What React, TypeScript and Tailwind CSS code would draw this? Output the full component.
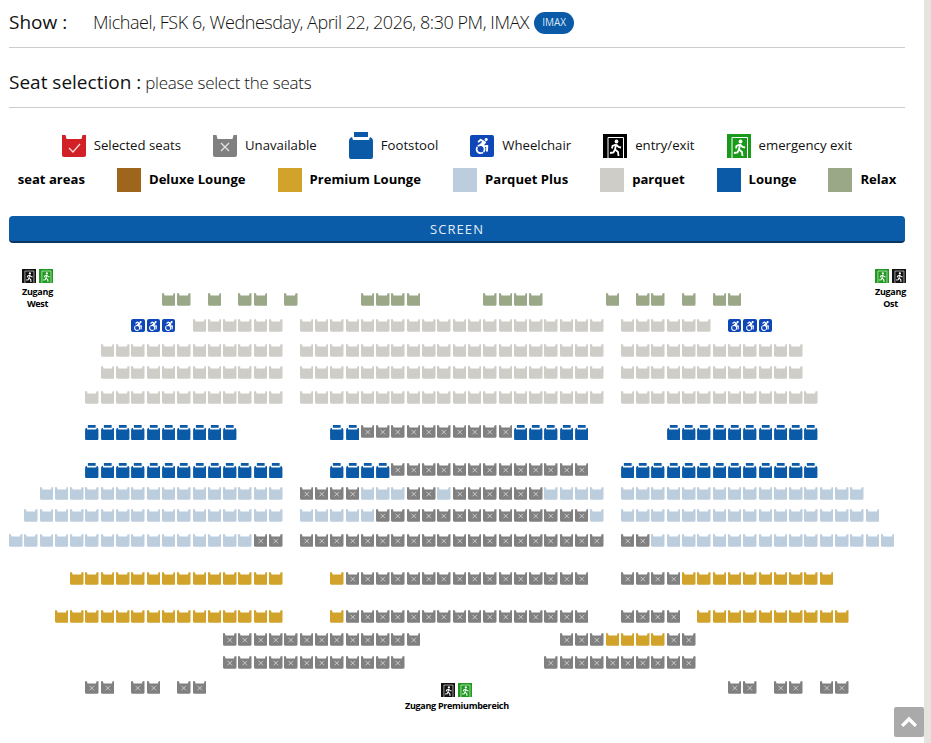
import { FaAccessibleIcon } from 'react-icons/fa';

type Kind = 'relax' | 'parquet' | 'plus' | 'lounge' | 'premium' | 'taken' | 'wheel';
type Segment = [Kind, number, number];

const fills: Record<string, string> = {
  relax: 'fill-[#9ba888]',
  parquet: 'fill-[#cfcdc8]',
  plus: 'fill-[#bccddd]',
  premium: 'fill-[#d1a32a]',
  taken: 'fill-[#808080]',
  selected: 'fill-[#d22027]',
};

// col = (x - 9) / 15.3
const rows: { gap: string; seats: Segment[] }[] = [
  { gap: 'mt-0', seats: [['relax', 10, 11], ['relax', 13, 13], ['relax', 15, 16], ['relax', 18, 18], ['relax', 23, 26], ['relax', 31, 34], ['relax', 39, 39], ['relax', 41, 42], ['relax', 44, 44], ['relax', 46, 47]] },
  { gap: 'mt-[13px]', seats: [['wheel', 8, 10], ['parquet', 12, 17], ['parquet', 19, 38], ['parquet', 40, 45], ['wheel', 47, 49]] },
  { gap: 'mt-[12px]', seats: [['parquet', 6, 17], ['parquet', 19, 38], ['parquet', 40, 51]] },
  { gap: 'mt-[9px]', seats: [['parquet', 6, 17], ['parquet', 19, 38], ['parquet', 40, 51]] },
  { gap: 'mt-[12px]', seats: [['parquet', 5, 17], ['parquet', 19, 38], ['parquet', 40, 52]] },
  { gap: 'mt-[21px]', seats: [['lounge', 5, 14], ['lounge', 21, 22], ['taken', 23, 32], ['lounge', 33, 37], ['lounge', 43, 52]] },
  { gap: 'mt-[25px]', seats: [['lounge', 5, 17], ['lounge', 21, 24], ['taken', 25, 37], ['lounge', 40, 52]] },
  { gap: 'mt-[11px]', seats: [['plus', 2, 17], ['taken', 19, 22], ['plus', 23, 25], ['taken', 26, 27], ['plus', 28, 28], ['taken', 29, 34], ['plus', 35, 38], ['plus', 40, 55]] },
  { gap: 'mt-[9px]', seats: [['plus', 1, 17], ['plus', 19, 23], ['taken', 24, 37], ['plus', 38, 38], ['plus', 40, 56]] },
  { gap: 'mt-[12px]', seats: [['plus', 0, 15], ['taken', 16, 17], ['taken', 19, 38], ['taken', 40, 41], ['plus', 42, 57]] },
  { gap: 'mt-[25px]', seats: [['premium', 4, 17], ['premium', 21, 21], ['taken', 22, 37], ['taken', 40, 43], ['premium', 44, 53]] },
  { gap: 'mt-[25px]', seats: [['premium', 3, 17], ['premium', 21, 21], ['taken', 22, 37], ['taken', 40, 43], ['premium', 45, 54]] },
  { gap: 'mt-[10px]', seats: [['taken', 14, 26], ['taken', 36, 38], ['premium', 39, 42], ['taken', 43, 44]] },
  { gap: 'mt-[10px]', seats: [['taken', 14, 25], ['taken', 35, 44]] },
  { gap: 'mt-[12px]', seats: [['taken', 5, 6], ['taken', 8, 9], ['taken', 11, 12], ['taken', 47, 48], ['taken', 50, 51], ['taken', 53, 54]] },
];

function Seat({ kind, className }: { kind: string; className: string }) {
  return (
    <svg viewBox="0 0 24 22" className={`${className} ${fills[kind]}`}>
      <path d="M0 0 H3.5 L4.5 4 H19.5 L20.5 0 H24 V20 Q24 22 22 22 H2 Q0 22 0 20 Z" />
      {kind === 'taken' && <path d="M8 8 L16 16 M16 8 L8 16" stroke="#e4e4e4" strokeWidth="1.3" fill="none" />}
      {kind === 'selected' && <path d="M7 13 L11 17 L18 9" stroke="#f6dcdc" strokeWidth="1.3" fill="none" />}
    </svg>
  );
}

function Footstool({ className }: { className: string }) {
  return (
    <svg viewBox="0 0 24 27" className={`${className} fill-[#0a5aa8]`}>
      <path d="M5 0 H19 V5 H5 Z" />
      <path d="M0 9 Q0 6 3 5 L4 8 H20 L21 5 Q24 6 24 9 V25 Q24 27 22 27 H2 Q0 27 0 25 Z" />
    </svg>
  );
}

function Wheelchair({ className, iconClass }: { className: string; iconClass: string }) {
  return (
    <span className={`flex items-center justify-center rounded-[2px] bg-[#0f47b8] text-white ${className}`}>
      <FaAccessibleIcon className={iconClass} />
    </span>
  );
}

function ExitSign({ className, bg }: { className: string; bg: string }) {
  return (
    <svg viewBox="0 0 24 24" className={className}>
      <rect width="24" height="24" fill={bg} />
      <path d="M5 24 V3.5 H20.5 V24" stroke="#fff" strokeWidth="1" fill="none" />
      <circle cx="13.5" cy="7.5" r="1.9" fill="#fff" />
      <path d="M13 10.5 L12 15.5 L15 18 L15.5 22 M12 15.5 L10.5 18.5 L7 19 M13 10.5 L9.5 12 L9 14.5 M13 10.5 L15.5 13 L18 13.5" stroke="#fff" strokeWidth="1.8" fill="none" />
    </svg>
  );
}

function SeatRow({ gap, seats }: { gap: string; seats: Segment[] }) {
  const cells: (Kind | null)[] = Array(58).fill(null);
  seats.forEach(([kind, from, to]) => {
    for (let i = from; i <= to; i++) cells[i] = kind;
  });
  return (
    <div className={`grid h-[13px] grid-cols-[repeat(58,15.3px)] ${gap}`}>
      {cells.map((kind, i) => {
        if (!kind) return <span key={i} />;
        if (kind === 'lounge') return <Footstool key={i} className="block h-[15px] w-[13.5px]" />;
        if (kind === 'wheel') return <Wheelchair key={i} className="h-[13px] w-[13.5px]" iconClass="h-[10px] w-[10px]" />;
        return <Seat key={i} kind={kind} className="block h-[13px] w-[13.5px]" />;
      })}
    </div>
  );
}

function Access({ label, reversed, className }: { label: string[]; reversed?: boolean; className: string }) {
  const black = <ExitSign className="h-[14px] w-[14px]" bg="#111" />;
  const green = <ExitSign className="h-[14px] w-[14px]" bg="#1f9a1f" />;
  return (
    <div className={`absolute flex flex-col items-center ${className}`}>
      <div className="flex gap-[3px]">
        {reversed ? green : black}
        {reversed ? black : green}
      </div>
      <div className="mt-[3px] text-center text-[9px] leading-[12.3px] font-bold tracking-[-0.3px] whitespace-nowrap text-black">
        {label.map((line) => (
          <div key={line}>{line}</div>
        ))}
      </div>
    </div>
  );
}

const areas = [
  ['Deluxe Lounge', 'bg-[#9e661d]'],
  ['Premium Lounge', 'bg-[#d1a32a]'],
  ['Parquet Plus', 'bg-[#bccddd]'],
  ['parquet', 'bg-[#cfcdc8]'],
  ['Lounge', 'bg-[#0a5aa8]'],
  ['Relax', 'bg-[#9ba888]'],
];

export default function App() {
  return (
    <div className="flex h-[743px] w-[931px] overflow-hidden bg-white font-['Open_Sans',sans-serif] text-[#111]">
      <div className="relative w-[924px] shrink-0 pr-[19px] pl-[9px]">
        {/* Show */}
        <div className="flex h-[48px] items-center border-b border-[#ccc] pb-[2px]">
          <span className="w-[84px] text-[19px]">Show :</span>
          <span className="text-[18px] font-light tracking-[-0.45px]">Michael, FSK 6, Wednesday, April 22, 2026, 8:30 PM, IMAX</span>
          <span className="ml-[5px] flex h-[22px] w-[40px] items-center justify-center rounded-full bg-[#0a5aa8] text-[10px] text-[#dce8f4]">IMAX</span>
        </div>

        {/* Seat selection */}
        <div className="flex h-[60px] items-center border-b border-[#ccc] pt-[10px]">
          <span className="text-[19px]">Seat selection :</span>
          <span className="ml-[4px] text-[17px] font-light tracking-[-0.25px]">please select the seats</span>
        </div>

        {/* Legend */}
        <div className="mt-[24px] flex h-[27px] items-center justify-center gap-8 text-[13.2px]">
          <div className="flex items-center gap-2">
            <Seat kind="selected" className="h-[22px] w-[24px]" />
            <span>Selected seats</span>
          </div>
          <div className="flex items-center gap-2">
            <Seat kind="taken" className="h-[22px] w-[24px]" />
            <span>Unavailable</span>
          </div>
          <div className="flex items-center gap-2">
            <Footstool className="h-[27px] w-[24px]" />
            <span>Footstool</span>
          </div>
          <div className="flex items-center gap-2">
            <Wheelchair className="h-[22px] w-[24px]" iconClass="h-[16px] w-[16px]" />
            <span>Wheelchair</span>
          </div>
          <div className="flex items-center gap-2">
            <ExitSign className="h-[24px] w-[24px]" bg="#000" />
            <span>entry/exit</span>
          </div>
          <div className="flex items-center gap-2">
            <ExitSign className="h-[24px] w-[24px]" bg="#1a9a1a" />
            <span>emergency exit</span>
          </div>
        </div>
        <div className="mt-[9px] flex h-[24px] items-center justify-center gap-8 text-[13.1px] font-bold text-black">
          <span>seat areas</span>
          {areas.map(([name, color]) => (
            <div key={name} className="flex items-center gap-2">
              <span className={`h-[24px] w-[24px] ${color}`} />
              <span>{name}</span>
            </div>
          ))}
        </div>

        {/* Screen */}
        <div className="mt-[24px] flex h-[27px] items-center justify-center rounded-[4px] border-b-2 border-[#0a3560] bg-[#0b5ca8] pt-[2px] text-[13px] tracking-[1.1px] text-[#e4eef8]">
          SCREEN
        </div>

        {/* Seat map */}
        <div className="relative mt-[50px]">
          {rows.map((row, i) => (
            <SeatRow key={i} gap={row.gap} seats={row.seats} />
          ))}
          <Access label={['Zugang', 'West']} className="top-[-24px] left-[13px]" />
          <Access label={['Zugang', 'Ost']} reversed className="top-[-24px] left-[866px]" />
          <Access label={['Zugang Premiumbereich']} className="top-[390px] left-[396px]" />
        </div>

        {/* Back to top */}
        <div className="absolute top-[707px] left-[894px] flex h-[30px] w-[30px] items-center justify-center rounded-[2px] bg-[#aaa]">
          <svg viewBox="0 0 20 14" className="h-[12px] w-[18px]">
            <path d="M2 11.5 L10 3.5 L18 11.5" stroke="#fff" strokeWidth="4" fill="none" />
          </svg>
        </div>
      </div>
      <div className="w-[7px] shrink-0 bg-[#e5e4de]" />
    </div>
  );
}
